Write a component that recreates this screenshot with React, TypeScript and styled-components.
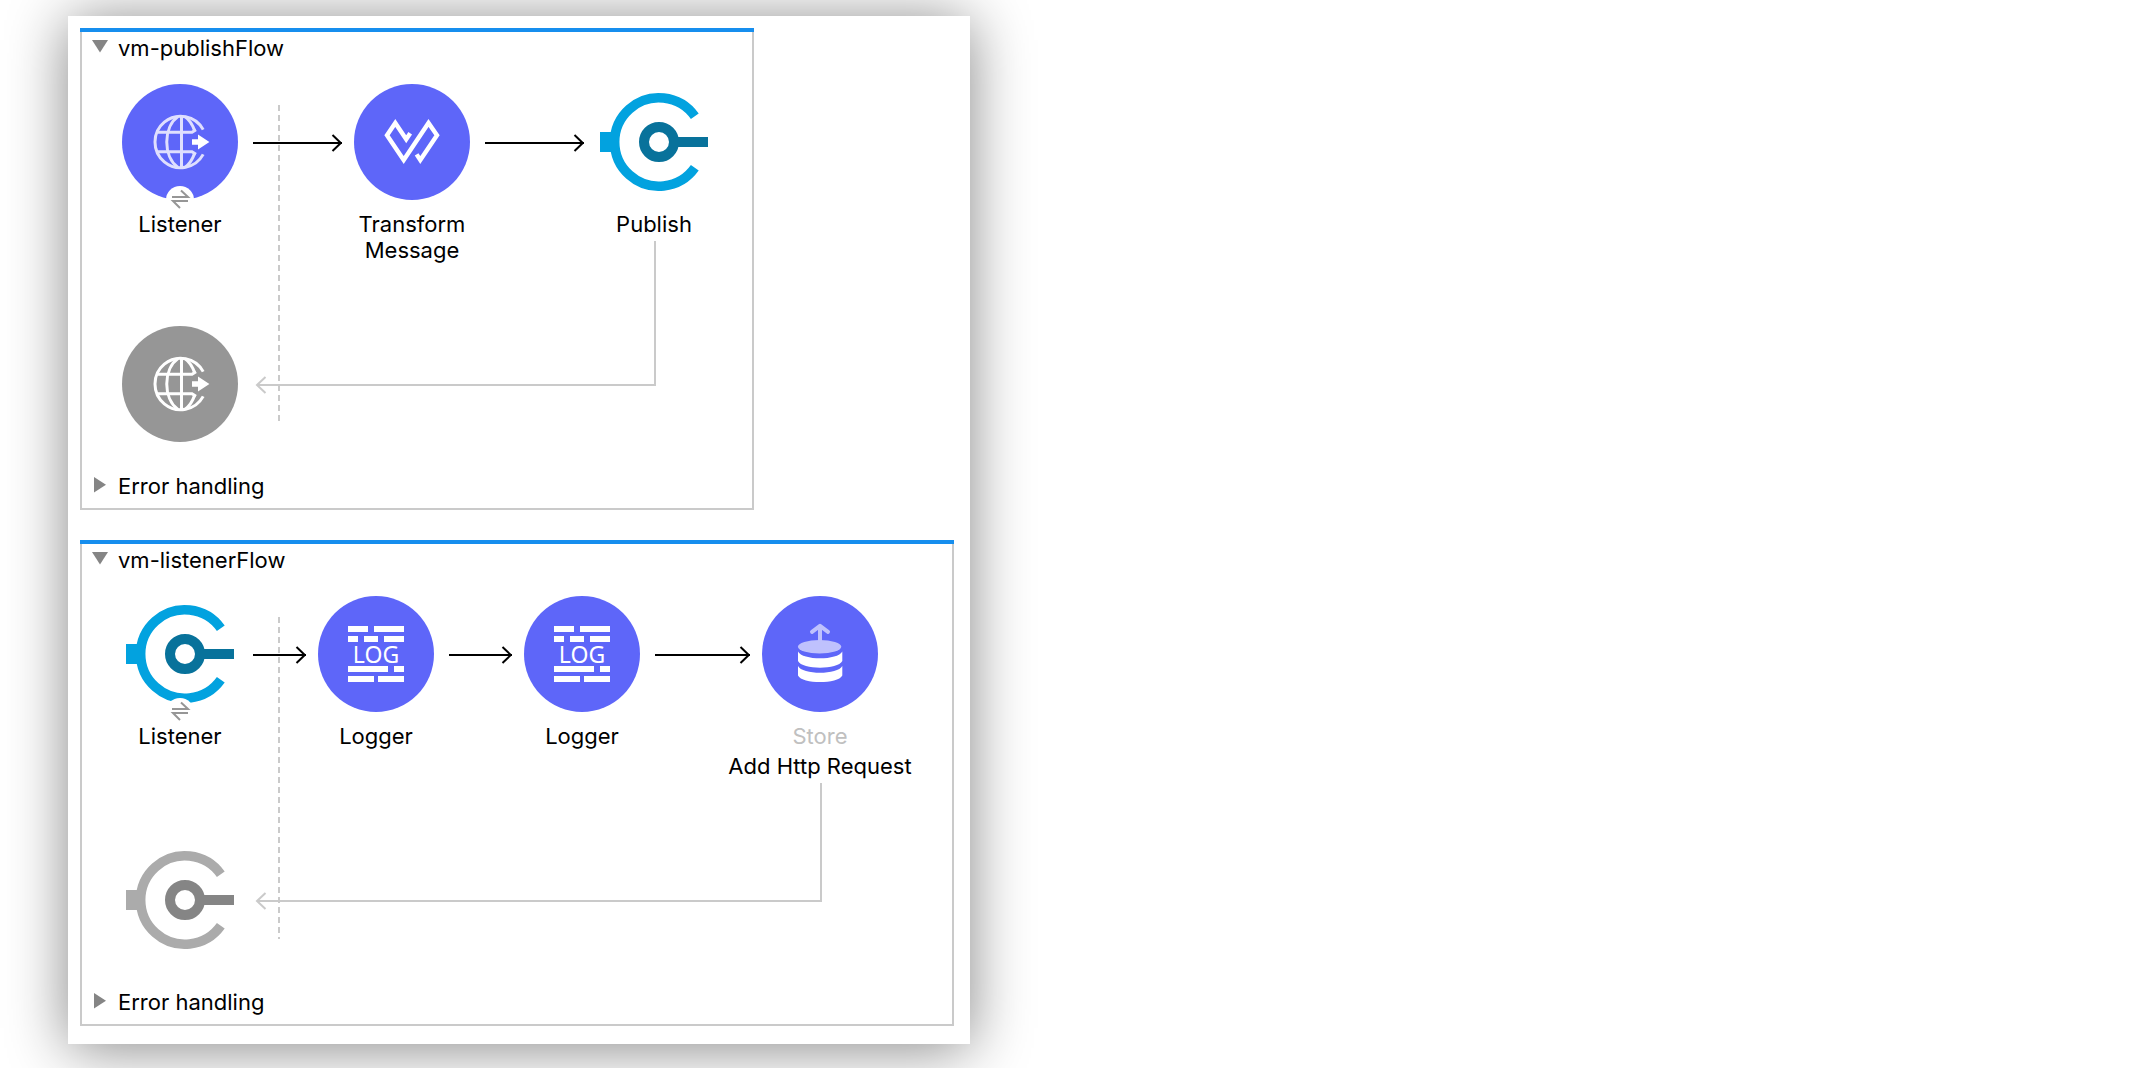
import { Fragment, useState } from "react";
import type { ReactNode } from "react";
import styled, { createGlobalStyle } from "styled-components";

const GlobalStyle = createGlobalStyle`
  body {
    margin: 0;
    background: #ffffff;
    color: #000000;
    font-family: Inter, "Liberation Sans", sans-serif;
    font-size: 22px;
    line-height: 26px;
  }
`;

const LINE = "#cacaca";

const Page = styled.main`
  display: flex;
  align-items: flex-start;
  padding: 16px 68px 24px;
`;

const Panel = styled.div`
  display: flex;
  flex-direction: column;
  align-items: flex-start;
  gap: 30px;
  padding: 12px 16px 18px 12px;
  background: #ffffff;
  box-shadow: 0 4px 56px rgba(0, 0, 0, 0.48);
`;

const FlowBox = styled.section`
  border: 2px solid ${LINE};
  border-top: 0;
`;

const FlowAccent = styled.div`
  height: 4px;
  margin: 0 -2px;
  background: #168eee;
`;

const SectionToggle = styled.button`
  display: flex;
  align-items: center;
  gap: 10px;
  margin: 0;
  padding: 3px 10px 1px;
  border: 0;
  background: none;
  color: inherit;
  font: inherit;
  cursor: pointer;
`;

const ErrorToggle = styled(SectionToggle)`
  padding: 0 10px 9px;
`;

const Canvas = styled.div<{ $endSpace: number }>`
  position: relative;
  padding: 22px ${(p) => p.$endSpace}px 31px 40px;
`;

const Lane = styled.div`
  display: flex;
  align-items: flex-start;
`;

const ReplyLane = styled(Lane)`
  margin-top: 63px;
`;

const NodeBox = styled.div`
  position: relative;
  display: flex;
  flex-direction: column;
  align-items: center;
  gap: 11px;
  width: 116px;
`;

const NodeArt = styled.svg`
  display: block;
  flex: none;
`;

const Exchange = styled.svg`
  position: absolute;
  top: 102px;
  left: 44px;
`;

const Labels = styled.div`
  display: flex;
  flex-direction: column;
  align-items: center;
  gap: 4px;
  text-align: center;
`;

const Label = styled.span<{ $muted?: boolean }>`
  color: ${(p) => (p.$muted ? "#c0c0c0" : "inherit")};
  white-space: pre;
`;

const Arrow = styled.div<{ $length: number }>`
  position: relative;
  width: ${(p) => p.$length}px;
  height: 2px;
  margin: 58px 12px 0 15px;
  background: #000000;
`;

const ArrowHead = styled.svg`
  position: absolute;
  top: -8px;
  right: 0;
`;

const Divider = styled.div`
  position: absolute;
  top: 43px;
  bottom: 50px;
  left: 196px;
  width: 2px;
  background: repeating-linear-gradient(${LINE} 0 6px, transparent 6px 10px);
`;

const ReturnLink = styled.div<{ $top: number; $right: number }>`
  position: absolute;
  top: ${(p) => p.$top}px;
  right: ${(p) => p.$right}px;
  bottom: 87px;
  left: 175px;
  border: solid ${LINE};
  border-width: 0 2px 2px 0;
`;

const ReturnHead = styled.svg`
  position: absolute;
  bottom: -10px;
  left: -2px;
`;

function Disc({ fill, children }: { fill: string; children: ReactNode }) {
  return (
    <NodeArt width="116" height="116" viewBox="0 0 116 116" aria-hidden="true">
      <circle cx="58" cy="58" r="58" fill={fill} />
      {children}
    </NodeArt>
  );
}

function HttpIcon({ grey }: { grey?: boolean }) {
  return (
    <Disc fill={grey ? "#969696" : "#5e66f9"}>
      <g fill="none" stroke={grey ? "#ffffff" : "#dfdffe"} strokeWidth="3">
        <path d="M81.2 45.6 A25.7 25.7 0 1 0 81.2 70.4" />
        <path d="M59.5 32 V84" />
        <path d="M35.5 48.3 H70 L74 45.8" />
        <path d="M35.5 67.7 H70 L74 70.2" />
        <path d="M56 32.6 C41 43 41 73 56 83.4" />
        <path d="M63 32.6 Q69.5 37.5 72.5 46.5" />
        <path d="M63 83.4 Q69.5 78.5 72.5 69.5" />
      </g>
      <path d="M70 55.3 H76 V50.5 L87.4 58 L76 65.5 V60.7 H70 Z" fill="#ffffff" />
    </Disc>
  );
}

function TransformIcon() {
  return (
    <Disc fill="#5e66f9">
      <path
        d="M56.2 49.2 L52.2 55.2 L41.3 39 L33 51.3 L49.7 76 L74.5 39 L83 51.3 L66.3 76 L62.6 70.4"
        fill="none"
        stroke="#ffffff"
        strokeWidth="4.4"
      />
    </Disc>
  );
}

const logBars = [
  [30, 30, 20],
  [56, 30, 30],
  [30, 40, 10],
  [46, 40, 14],
  [66, 40, 20],
  [30, 70, 40],
  [76, 70, 10],
  [30, 80, 26],
  [60, 80, 26],
];

function LoggerIcon() {
  return (
    <Disc fill="#5e66f9">
      {logBars.map(([x, y, width]) => (
        <rect key={`${x}-${y}`} x={x} y={y} width={width} height="6" fill="#ffffff" />
      ))}
      <text
        x="58"
        y="67"
        textAnchor="middle"
        fill="#ffffff"
        fontFamily="'Noto Sans', 'Open Sans', sans-serif"
        fontSize="23"
      >
        LOG
      </text>
    </Disc>
  );
}

function StoreIcon() {
  return (
    <Disc fill="#5e66f9">
      <ellipse cx="57.6" cy="50.7" rx="21.7" ry="6.7" fill="#bfc1fd" />
      <path
        d="M58 46 V30 M50 35.8 L58 29.8 L66 35.8"
        fill="none"
        stroke="#bfc1fd"
        strokeWidth="4"
        strokeLinecap="round"
        strokeLinejoin="round"
      />
      <path d="M36 55.5 C40 64.6 76 64.6 80.3 55.5 V65 C76 73.9 40 73.9 36 65 Z" fill="#ffffff" />
      <path d="M36 70 C40 79 76 79 80.3 70 V79.4 C76 88.2 40 88.2 36 79.4 Z" fill="#ffffff" />
    </Disc>
  );
}

function VmIcon({ grey }: { grey?: boolean }) {
  const outer = grey ? "#ababab" : "#02a2df";
  const inner = grey ? "#858585" : "#08729b";
  return (
    <NodeArt width="116" height="116" viewBox="0 0 116 116" aria-hidden="true">
      <path d="M98.8 32.3 A44.2 44.2 0 1 0 98.8 83.7" fill="none" stroke={outer} strokeWidth="9.6" />
      <rect x="4" y="48" width="14" height="20" fill={outer} />
      <circle cx="63" cy="58" r="15" fill="none" stroke={inner} strokeWidth="10" />
      <rect x="80" y="53" width="32" height="10" fill={inner} />
    </NodeArt>
  );
}

function ExchangeBadge() {
  return (
    <Exchange width="28" height="28" viewBox="0 0 28 28" aria-hidden="true">
      <circle cx="14" cy="14" r="14" fill="#ffffff" />
      <path d="M6 11 H22 L15 4.5 M22 15 H7 L14 22" fill="none" stroke="#969696" strokeWidth="2" />
    </Exchange>
  );
}

type IconKind = "http" | "transform" | "logger" | "store" | "vm";

function NodeIcon({ kind, grey }: { kind: IconKind; grey?: boolean }) {
  switch (kind) {
    case "http":
      return <HttpIcon grey={grey} />;
    case "transform":
      return <TransformIcon />;
    case "logger":
      return <LoggerIcon />;
    case "store":
      return <StoreIcon />;
    default:
      return <VmIcon grey={grey} />;
  }
}

function Triangle({ open }: { open: boolean }) {
  return (
    <svg width="16" height="18" viewBox="0 0 16 18" aria-hidden="true">
      <path d={open ? "M0 1 H16 L8 13.5 Z" : "M2 0 L14 7.8 L2 15.6 Z"} fill="#858585" />
    </svg>
  );
}

interface FlowNode {
  kind: IconKind;
  label: string;
  type?: string;
  exchange?: boolean;
  arrow?: number;
}

interface FlowData {
  name: string;
  endSpace: number;
  returnTop: number;
  returnRight: number;
  nodes: FlowNode[];
}

const flows: FlowData[] = [
  {
    name: "vm-publishFlow",
    endSpace: 40,
    returnTop: 179,
    returnRight: 96,
    nodes: [
      { kind: "http", label: "Listener", exchange: true, arrow: 89 },
      { kind: "transform", label: "Transform\nMessage", arrow: 99 },
      { kind: "vm", label: "Publish" },
    ],
  },
  {
    name: "vm-listenerFlow",
    endSpace: 74,
    returnTop: 209,
    returnRight: 130,
    nodes: [
      { kind: "vm", label: "Listener", exchange: true, arrow: 53 },
      { kind: "logger", label: "Logger", arrow: 63 },
      { kind: "logger", label: "Logger", arrow: 95 },
      { kind: "store", type: "Store", label: "Add Http Request" },
    ],
  },
];

function Flow({ flow }: { flow: FlowData }) {
  const [open, setOpen] = useState(true);
  const [errorsOpen, setErrorsOpen] = useState(false);
  return (
    <FlowBox aria-label={flow.name}>
      <FlowAccent />
      <SectionToggle type="button" aria-expanded={open} onClick={() => setOpen(!open)}>
        <Triangle open={open} />
        {flow.name}
      </SectionToggle>
      {open && (
        <Canvas $endSpace={flow.endSpace}>
          <Divider />
          <ReturnLink $top={flow.returnTop} $right={flow.returnRight}>
            <ReturnHead width="12" height="18" viewBox="0 0 12 18" aria-hidden="true">
              <path d="M10.5 1 L2 9 L10.5 17" fill="none" stroke={LINE} strokeWidth="2" />
            </ReturnHead>
          </ReturnLink>
          <Lane>
            {flow.nodes.map((node, index) => (
              <Fragment key={index}>
                <NodeBox>
                  <NodeIcon kind={node.kind} />
                  {node.exchange && <ExchangeBadge />}
                  <Labels>
                    {node.type && <Label $muted>{node.type}</Label>}
                    <Label>{node.label}</Label>
                  </Labels>
                </NodeBox>
                {node.arrow && (
                  <Arrow $length={node.arrow}>
                    <ArrowHead width="12" height="18" viewBox="0 0 12 18" aria-hidden="true">
                      <path d="M2.5 1 L10.8 9 L2.5 17" fill="none" stroke="#000000" strokeWidth="2" />
                    </ArrowHead>
                  </Arrow>
                )}
              </Fragment>
            ))}
          </Lane>
          <ReplyLane>
            <NodeIcon kind={flow.nodes[0].kind} grey />
          </ReplyLane>
        </Canvas>
      )}
      <ErrorToggle type="button" aria-expanded={errorsOpen} onClick={() => setErrorsOpen(!errorsOpen)}>
        <Triangle open={errorsOpen} />
        Error handling
      </ErrorToggle>
    </FlowBox>
  );
}

export default function App() {
  return (
    <Page>
      <GlobalStyle />
      <Panel>
        {flows.map((flow) => (
          <Flow key={flow.name} flow={flow} />
        ))}
      </Panel>
    </Page>
  );
}
